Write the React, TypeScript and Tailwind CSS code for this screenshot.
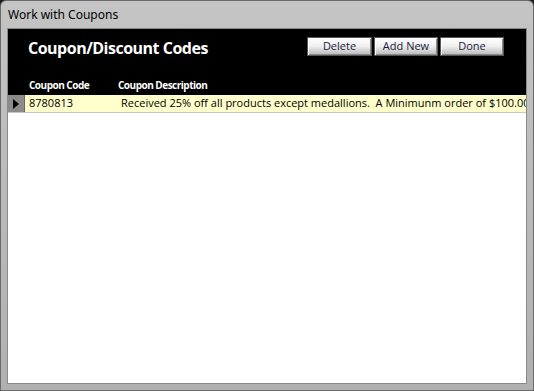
export default function App() {
  const btn =
    "h-[19px] flex items-center justify-center text-[11px] text-[#1a1a40] border border-[#555] bg-gradient-to-b from-[#ffffff] via-[#eeeeee] to-[#b8b8b8] shadow-[inset_1px_1px_0_#fff,inset_-1px_-1px_0_#888]";
  return (
    <div className="w-[534px] h-[391px] bg-[#1a1a1a]" style={{ fontFamily: '"Open Sans", "Liberation Sans", sans-serif' }}>
      <div className="w-full h-full rounded-t-[6px] bg-gradient-to-b from-[#c4c4c4] to-[#b0b0b0] border border-[#6a6a6a] flex flex-col">
        <div className="h-[27px] flex items-center pl-[7px] text-[12px] text-black" style={{ fontFamily: '"Noto Sans", "Open Sans", sans-serif' }}>
          Work with Coupons
        </div>
        <div className="flex-1 mx-[6px] mb-[6px] border border-[#8a8a8a] bg-white flex flex-col">
          <div className="h-[66px] bg-black flex flex-col">
            <div className="flex items-start pt-[8px]">
              <div className="ml-[20px] text-[16px] font-bold text-white leading-[22px] tracking-[-0.5px]">Coupon/Discount Codes</div>
              <div className="ml-auto mr-[22px] flex gap-[2px]">
                <div className={btn + " w-[65px]"}>Delete</div>
                <div className={btn + " w-[64px]"}>Add New</div>
                <div className={btn + " w-[64px]"}>Done</div>
              </div>
            </div>
            <div className="mt-auto mb-[3px] flex text-[10px] font-bold text-white leading-[14px] tracking-[-0.5px]">
              <div className="ml-[21px] w-[89px]">Coupon Code</div>
              <div>Coupon Description</div>
            </div>
          </div>
          <div className="h-[18px] flex border-b border-[#c8c8c8] bg-[#ffffcc]">
            <div className="w-[17px] shrink-0 bg-[#8c8c8c] border-r border-[#666] flex items-center justify-center">
              <svg width="6" height="10" viewBox="0 0 6 10"><path d="M0 0 L6 5 L0 10 Z" fill="#000" /></svg>
            </div>
            <div className="flex items-center text-[11px] text-black whitespace-nowrap overflow-hidden flex-1">
              <div className="ml-[4px] w-[92px] shrink-0">8780813</div>
              <div className="shrink-0">Received 25% off all products except medallions.&nbsp; A Minimunm order of $100.00</div>
            </div>
          </div>
        </div>
      </div>
    </div>
  );
}
